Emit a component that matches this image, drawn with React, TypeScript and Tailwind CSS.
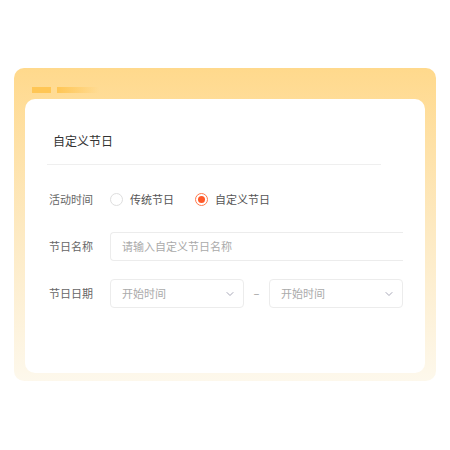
import { ChevronDown } from 'lucide-react';

const FONT = { fontFamily: '"Noto Sans CJK SC", "Noto Sans", sans-serif' };

function Radio({ checked, label }: { checked?: boolean; label: string }) {
  return (
    <div className="flex items-center gap-[7px]">
      {checked ? (
        <span className="w-[13px] h-[13px] rounded-full border border-[#ff7a4d] flex items-center justify-center">
          <span className="w-[7px] h-[7px] rounded-full bg-[#ff5a2a]" />
        </span>
      ) : (
        <span className="w-[13px] h-[13px] rounded-full border border-[#dedede] bg-white" />
      )}
      <span className="text-[11px] text-[#555]">{label}</span>
    </div>
  );
}

function Select() {
  return (
    <div className="w-[134px] h-[29px] border border-[#ececec] rounded-[4px] flex items-center justify-between pl-[11px] pr-[7px]">
      <span className="text-[11px] text-[#aaa]">开始时间</span>
      <ChevronDown className="w-[12px] h-[12px] text-[#a8a8b8]" strokeWidth={2} />
    </div>
  );
}

export default function App() {
  return (
    <div className="w-[450px] h-[450px] bg-white pt-[68px] pl-[14px]" style={FONT}>
      <div className="w-[422px] h-[313px] rounded-[10px] bg-gradient-to-b from-[#ffd98c] via-[#fde9c0] to-[#fdf8ec] px-[11px] pb-[8px] flex flex-col">
        {/* window bars */}
        <div className="flex items-center gap-[6px] pl-[7px] pt-[13px] h-[31px]">
          <div className="w-[19px] h-[6px] bg-[#ffc655]" />
          <div className="w-[42px] h-[6px] bg-gradient-to-r from-[#ffc655] to-transparent" />
        </div>
        <div className="flex-1 bg-white rounded-[10px] pl-[22px] pt-[33px] overflow-hidden">
          <div className="w-[334px] pl-[6px] pb-[14px] border-b border-[#efefef] text-[12px] text-[#333]">
            自定义节日
          </div>
          <div className="flex items-center h-[14px] mt-[27px]">
            <span className="w-[63px] pl-[2px] text-[11px] text-[#666]">活动时间</span>
            <div className="flex items-center gap-[21px]">
              <Radio label="传统节日" />
              <Radio checked label="自定义节日" />
            </div>
          </div>
          <div className="flex items-center mt-[26px]">
            <span className="w-[63px] pl-[2px] text-[11px] text-[#666]">节日名称</span>
            <div className="w-[293px] h-[29px] border border-r-0 border-[#ececec] rounded-l-[4px] flex items-center pl-[11px] text-[11px] text-[#aaa]">
              请输入自定义节日名称
            </div>
          </div>
          <div className="flex items-center mt-[18px]">
            <span className="w-[63px] pl-[2px] text-[11px] text-[#666]">节日日期</span>
            <Select />
            <span className="w-[25px] text-center text-[11px] text-[#999]">–</span>
            <Select />
          </div>
        </div>
      </div>
    </div>
  );
}
